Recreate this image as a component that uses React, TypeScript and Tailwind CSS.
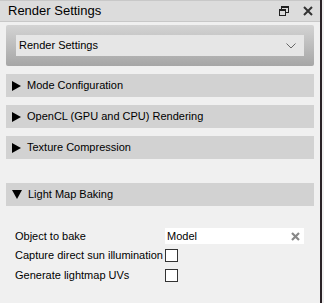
import React from "react";

const font = { fontFamily: '"Liberation Sans", Arial, sans-serif' };

function Tri({ open }: { open?: boolean }) {
  return open ? (
    <svg width="10" height="9" viewBox="0 0 10 9" className="shrink-0">
      <path d="M0 0 H10 L5 9 Z" fill="#000" />
    </svg>
  ) : (
    <svg width="9" height="10" viewBox="0 0 9 10" className="shrink-0">
      <path d="M0 0 L9 5 L0 10 Z" fill="#000" />
    </svg>
  );
}

function Header({ title, open }: { title: string; open?: boolean }) {
  return (
    <div className="flex h-[23px] items-center gap-[6px] bg-[#d2d2d2] pl-[6px] text-[11px] text-black">
      <Tri open={open} />
      <span>{title}</span>
    </div>
  );
}

function Check() {
  return <div className="h-[13px] w-[13px] border border-[#333] bg-white" />;
}

export default function App() {
  return (
    <div className="relative h-[303px] w-[324px] overflow-hidden bg-[#f0f0f0]" style={font}>
      <div className="flex h-full w-[322px] flex-col border-r-2 border-[#2a2226]">
        <div className="flex h-[22px] items-center border-t border-b border-[#c8c8c8] bg-[#dcdcdc] pl-[8px] pr-[6px]">
          <span className="flex-1 text-[13px] text-black">Render Settings</span>
          <svg width="10" height="10" viewBox="0 0 10 10" className="mr-[14px]">
            <rect x="2.5" y="0.5" width="7" height="6" fill="none" stroke="#222" />
            <rect x="2.5" y="0.5" width="7" height="1.5" fill="#222" />
            <rect x="0.5" y="3.5" width="6" height="6" fill="#dcdcdc" stroke="#222" />
            <rect x="0.5" y="3.5" width="6" height="1.5" fill="#222" />
          </svg>
          <svg width="10" height="10" viewBox="0 0 10 10" className="mr-[1px]">
            <path d="M1 1 L9 9 M9 1 L1 9" stroke="#333" strokeWidth="2" />
          </svg>
        </div>
        <div className="px-[6px] pt-[3px]">
          <div className="flex h-[41px] items-center rounded-[2px] bg-gradient-to-b from-[#d4d4d4] to-[#a6a6a6] px-[10px]">
            <div className="flex h-[21px] flex-1 items-center justify-between bg-[#e6e6e6] pl-[3px] pr-[8px] text-[11px] text-black">
              <span>Render Settings</span>
              <svg width="10" height="6" viewBox="0 0 10 6">
                <path d="M0.5 0.5 L5 5 L9.5 0.5" fill="none" stroke="#666" strokeWidth="1" />
              </svg>
            </div>
          </div>
          <div className="mt-[8px] flex flex-col gap-[8px]">
            <Header title="Mode Configuration" />
            <Header title="OpenCL (GPU and CPU) Rendering" />
            <Header title="Texture Compression" />
          </div>
          <div className="mt-[24px]">
            <Header title="Light Map Baking" open />
          </div>
          <div className="mt-[22px] flex flex-col gap-[3px] pl-[9px] text-[11px] text-black">
            <div className="flex h-[16px] items-center">
              <span className="w-[150px] whitespace-nowrap">Object to bake</span>
              <div className="mr-[10px] flex h-[16px] flex-1 items-center justify-between bg-white pl-[2px] pr-[4px]">
                <span>Model</span>
                <svg width="9" height="9" viewBox="0 0 9 9">
                  <path d="M1 1 L8 8 M8 1 L1 8" stroke="#888" strokeWidth="2.2" />
                </svg>
              </div>
            </div>
            <div className="flex h-[17px] items-center">
              <span className="w-[150px] whitespace-nowrap">Capture direct sun illumination</span>
              <Check />
            </div>
            <div className="flex h-[17px] items-center">
              <span className="w-[150px] whitespace-nowrap">Generate lightmap UVs</span>
              <Check />
            </div>
          </div>
        </div>
      </div>
    </div>
  );
}
